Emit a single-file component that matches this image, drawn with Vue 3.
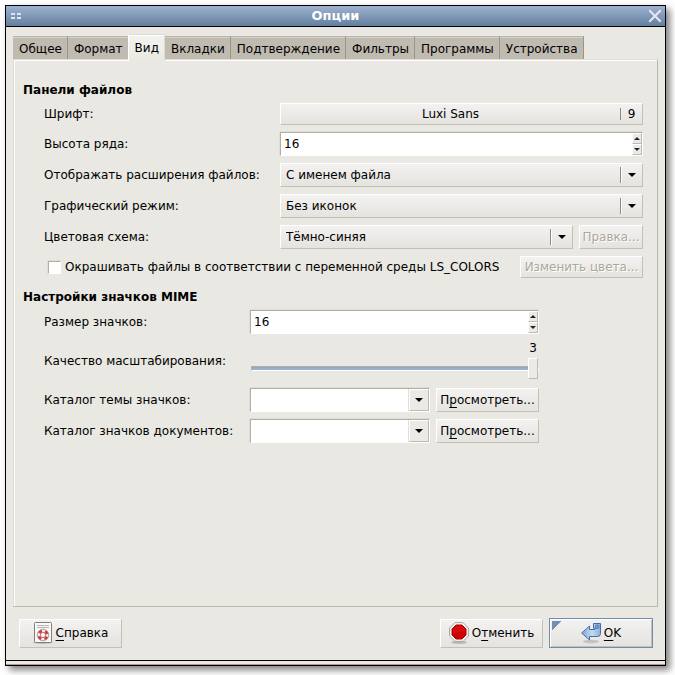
<script setup>
import { ref } from 'vue'

const tabs = ['Общее', 'Формат', 'Вид', 'Вкладки', 'Подтверждение', 'Фильтры', 'Программы', 'Устройства']
const active = ref('Вид')

const rowHeight = ref(16)
const iconSize = ref(16)
const quality = ref(3)
const useLsColors = ref(false)

const themeDir = ref('')
const documentDir = ref('')

const choices = [
  { id: 'extensions', label: 'Отображать расширения файлов:', options: ['С именем файла', 'В отдельном столбце'] },
  { id: 'graphics', label: 'Графический режим:', options: ['Без иконок', 'Значки файлов', 'Значки MIME'] },
  { id: 'scheme', label: 'Цветовая схема:', options: ['Тёмно-синяя', 'Классическая'], edit: true },
]
</script>

<template>
  <main class="window">
    <header class="titlebar">
      <svg class="grip" width="10" height="6" viewBox="0 0 10 6" aria-hidden="true">
        <path d="M0 0h4v2H0zM6 0h4v2H6zM0 4h4v2H0zM6 4h4v2H6z" fill="#dfe6ee" />
      </svg>
      <h1>Опции</h1>
      <button class="close" type="button" aria-label="Закрыть">
        <svg width="14" height="14" viewBox="0 0 14 14" aria-hidden="true">
          <path d="M2 2l10 10M12 2L2 12" stroke="#e3eaf2" stroke-width="2" stroke-linecap="square" />
        </svg>
      </button>
    </header>

    <div class="content">
      <div class="tabs" role="tablist">
        <button
          v-for="tab in tabs"
          :key="tab"
          type="button"
          role="tab"
          class="tab"
          :class="{ active: tab === active }"
          :aria-selected="tab === active"
          @click="active = tab"
        >{{ tab }}</button>
      </div>

      <section class="panel" role="tabpanel">
        <h2>Панели файлов</h2>
        <div class="form files">
          <label for="font">Шрифт:</label>
          <button id="font" class="btn font" type="button">
            <span class="font-name">Luxi Sans</span>
            <span class="font-size">9</span>
          </button>

          <label for="row-height">Высота ряда:</label>
          <div class="entry">
            <input id="row-height" v-model="rowHeight" type="text" inputmode="numeric">
            <div class="spin">
              <button type="button" aria-label="Больше" @click="rowHeight++">
                <svg width="6" height="3" viewBox="0 0 6 3"><path d="M0 3h6L3 0z" fill="#222" /></svg>
              </button>
              <button type="button" aria-label="Меньше" @click="rowHeight--">
                <svg width="6" height="3" viewBox="0 0 6 3"><path d="M0 0h6L3 3z" fill="#222" /></svg>
              </button>
            </div>
          </div>

          <template v-for="choice in choices" :key="choice.id">
            <label :for="choice.id">{{ choice.label }}</label>
            <div class="line">
              <div class="combo">
                <select :id="choice.id" class="btn">
                  <option v-for="option in choice.options" :key="option">{{ option }}</option>
                </select>
                <span class="combo-mark">
                  <svg width="8" height="4" viewBox="0 0 8 4"><path d="M0 0h8L4 4z" fill="#000" /></svg>
                </span>
              </div>
              <button v-if="choice.edit" class="btn small" type="button" disabled>Правка...</button>
            </div>
          </template>

          <div class="line check-line">
            <input id="ls-colors" v-model="useLsColors" type="checkbox">
            <label for="ls-colors">Окрашивать файлы в соответствии с переменной среды LS_COLORS</label>
            <button class="btn large" type="button" disabled>Изменить цвета...</button>
          </div>
        </div>

        <h2>Настройки значков MIME</h2>
        <div class="form icons">
          <label for="icon-size">Размер значков:</label>
          <div class="entry">
            <input id="icon-size" v-model="iconSize" type="text" inputmode="numeric">
            <div class="spin">
              <button type="button" aria-label="Больше" @click="iconSize++">
                <svg width="6" height="3" viewBox="0 0 6 3"><path d="M0 3h6L3 0z" fill="#222" /></svg>
              </button>
              <button type="button" aria-label="Меньше" @click="iconSize--">
                <svg width="6" height="3" viewBox="0 0 6 3"><path d="M0 0h6L3 3z" fill="#222" /></svg>
              </button>
            </div>
          </div>

          <label for="quality">Качество масштабирования:</label>
          <div class="scale">
            <output for="quality">{{ quality }}</output>
            <input id="quality" v-model="quality" type="range" min="0" max="3">
          </div>

          <label for="theme-dir">Каталог темы значков:</label>
          <div class="line">
            <div class="entry">
              <input id="theme-dir" v-model="themeDir" type="text">
              <button class="drop" type="button" aria-label="Показать список">
                <svg width="8" height="4" viewBox="0 0 8 4"><path d="M0 0h8L4 4z" fill="#000" /></svg>
              </button>
            </div>
            <button class="btn browse" type="button">П<u>р</u>осмотреть...</button>
          </div>

          <label for="document-dir">Каталог значков документов:</label>
          <div class="line">
            <div class="entry">
              <input id="document-dir" v-model="documentDir" type="text">
              <button class="drop" type="button" aria-label="Показать список">
                <svg width="8" height="4" viewBox="0 0 8 4"><path d="M0 0h8L4 4z" fill="#000" /></svg>
              </button>
            </div>
            <button class="btn browse" type="button">П<u>р</u>осмотреть...</button>
          </div>
        </div>
      </section>

      <footer class="actions">
        <button class="btn action help" type="button">
          <svg width="20" height="22" viewBox="0 0 20 22" aria-hidden="true">
            <ellipse cx="10" cy="20.5" rx="10" ry="1.5" fill="#000" opacity=".18" />
            <rect x="1.5" y=".5" width="17" height="20" rx="1" fill="#f8f8f7" stroke="#7d7f7b" />
            <path d="M4 3.5h12M4 5.5h12" stroke="#b5b6b3" />
            <circle cx="10" cy="13" r="4.2" fill="none" stroke="#f2eeee" stroke-width="3" />
            <circle cx="10" cy="13" r="4.2" fill="none" stroke="#d83a3a" stroke-width="3" stroke-dasharray="3.3 3.3" stroke-dashoffset="-1.65" />
            <circle cx="10" cy="13" r="5.8" fill="none" stroke="#b08888" stroke-width=".8" />
            <circle cx="10" cy="13" r="2.6" fill="#f8f8f7" stroke="#a86060" stroke-width=".8" />
          </svg>
          <span><u>С</u>правка</span>
        </button>
        <button class="btn action" type="button">
          <svg width="20" height="22" viewBox="0 0 20 22" aria-hidden="true">
            <ellipse cx="10" cy="20.3" rx="8" ry="1.6" fill="#000" opacity=".2" />
            <path d="M6 .6h8L19.4 6v8L14 19.4H6L.6 14V6z" fill="#f4f4f2" stroke="#a3a5a1" />
            <path d="M7 3h6l4 4v6l-4 4H7l-4-4V7z" fill="#cc0000" stroke="#b00000" />
            <path d="M7.2 3.8h5.6l3.4 3.4v2.3c-4 0-8 .5-12.400 2V7.2z" fill="#dc1818" opacity=".5" />
          </svg>
          <span>О<u>т</u>менить</span>
        </button>
        <button class="btn action default" type="button">
          <svg width="20" height="22" viewBox="0 0 20 22" aria-hidden="true">
            <defs>
              <linearGradient id="arrow-fill" x1="0" y1="0" x2="1" y2="0">
                <stop offset="0" stop-color="#7fa8d4" />
                <stop offset=".55" stop-color="#c6daee" />
                <stop offset="1" stop-color="#8db0d8" />
              </linearGradient>
            </defs>
            <ellipse cx="10" cy="19.5" rx="8" ry="1.8" fill="#000" opacity=".15" />
            <path d="M12.5 1.500h7v10q0 3-3 3H8.500v3.500L.700 11 8.500 4v3.500h5q1.200 0 1.200-1.200H12.500z" fill="url(#arrow-fill)" stroke="#3f6ea8" stroke-linejoin="round" />
            <path d="M14.500 3h3.300v3.500l-3.300-.5z" fill="#7199c8" stroke="#5580b4" stroke-width=".8" />
          </svg>
          <span><u>О</u>K</span>
        </button>
      </footer>
    </div>
    <div class="resize-bar"></div>
  </main>
</template>

<style>
body {
  margin: 0;
  background: #fff;
}
</style>

<style scoped>
* {
  box-sizing: border-box;
}

.window {
  display: flex;
  flex-direction: column;
  min-height: calc(100vh - 14px);
  margin: 5px 9px 9px 5px;
  border: 1px solid #000;
  background: #e9e8e2;
  color: #000;
  box-shadow: 4px 4px 7px rgba(0, 0, 0, 0.5);
  font-family: "DejaVu Sans", sans-serif;
  font-size: 12px;
  line-height: 16px;
}

button,
input,
select {
  margin: 0;
  font: inherit;
  color: inherit;
}

u {
  text-underline-offset: 3px;
  text-decoration-skip-ink: none;
}

.titlebar {
  display: grid;
  grid-template-columns: 18px 1fr 18px;
  align-items: center;
  height: 21px;
  border-bottom: 1px solid #000;
  background: linear-gradient(#9db2cf, #647f9f);
}

.grip {
  margin-left: 5px;
}

.titlebar h1 {
  margin: 0;
  color: #fff;
  font-size: 13px;
  text-align: center;
}

.close {
  display: flex;
  padding: 0 0 0 1px;
  border: 0;
  background: none;
}

.content {
  display: flex;
  flex: 1;
  flex-direction: column;
  padding: 7px 7px 12px;
}

.tabs {
  display: flex;
  align-items: flex-end;
}

.tab {
  height: 23px;
  padding: 1px 5px 0 6px;
  border: 0;
  border-top: 1px solid #bab5a8;
  border-right: 1px solid #9a9586;
  background: #c0bbb0;
  box-shadow: inset 0 1px #d6d2c8;
  white-space: nowrap;
}

.tab.active {
  z-index: 1;
  height: 27px;
  margin: 0 0 -2px -1px;
  padding-bottom: 1px;
  border-top: 1px solid #dedcd4;
  border-right: 1px solid #dedcd4;
  border-left: 1px solid #fff;
  background: linear-gradient(#f4f3f1, #e9e8e2);
  box-shadow: inset 0 1px #fff;
}

.panel {
  flex: 1;
  padding: 21px 14px 20px 9px;
  border: 1px solid #bab7ab;
  border-top-color: #dedcd4;
  border-left-color: #dedcd4;
  box-shadow: inset 1px 1px #fff;
}

h2 {
  margin: 0;
  font-size: 12px;
  line-height: 18px;
}

.panel h2 + .form {
  margin-top: 4px;
}

.form + h2 {
  margin-top: 10px;
}

.form {
  display: grid;
  align-items: center;
  row-gap: 7px;
  padding-left: 21px;
}

.files {
  grid-template-columns: 236px 1fr;
}

.icons {
  grid-template-columns: 206px 289px;
}

.line {
  display: flex;
  gap: 6px;
}

.btn {
  padding: 0;
  border: 1px solid;
  border-color: #fff #c3c0b6 #c3c0b6 #fff;
  border-radius: 0;
  background: linear-gradient(#f3f2f1, #e5e3de);
}

.btn:disabled {
  color: #aca899;
  text-shadow: 1px 1px #fff;
}

.font {
  display: flex;
  align-items: center;
  height: 22px;
}

.font-name {
  flex: 1;
}

.font-size {
  width: 22px;
  border-left: 1px solid #8e8a7c;
  line-height: 12px;
}

.entry {
  display: flex;
  flex: 1;
  min-width: 0;
  height: 24px;
  border: 1px solid;
  border-color: #b3b0a3 #fff #fff #b3b0a3;
  background: #fff;
  box-shadow: 0 -1px #dfddd5, -1px 0 #dfddd5;
}

.entry input {
  flex: 1;
  min-width: 0;
  padding: 0 3px;
  border: 0;
  outline: 0;
  background: none;
}

.spin {
  display: flex;
  flex-direction: column;
  width: 10px;
  background: #e2e0da;
}

.spin button,
.drop {
  display: flex;
  flex: 1;
  align-items: center;
  justify-content: center;
  padding: 0;
  border: 1px solid;
  border-color: #fff #bdbab0 #bdbab0 #fff;
  background: #eceae6;
}

.drop {
  flex: 0 0 20px;
  box-shadow: -1px 0 #dfddd5;
}

.combo {
  position: relative;
  flex: 1;
}

.combo select {
  display: block;
  width: 100%;
  height: 24px;
  padding: 0 26px 0 5px;
  appearance: none;
}

.combo-mark {
  position: absolute;
  top: 4px;
  right: 1px;
  display: flex;
  align-items: center;
  justify-content: center;
  width: 22px;
  height: 16px;
  border-left: 1px solid #8e8a7c;
  box-shadow: inset 1px 0 #fff;
  pointer-events: none;
}

.small {
  width: 64px;
}

.large {
  width: 123px;
  height: 22px;
}

.browse {
  width: 103px;
}

.check-line {
  grid-column: 1 / -1;
  gap: 4px;
  align-items: center;
  padding-left: 4px;
}

.check-line input {
  width: 13px;
  height: 13px;
  border: 1px solid;
  border-color: #b3b0a3 #fff #fff #b3b0a3;
  background: #fff;
  box-shadow: 0 -1px #dfddd5, -1px 0 #dfddd5;
  appearance: none;
}

.check-line input:checked {
  background: #6c88ab;
}

.check-line label {
  flex: 1;
  white-space: nowrap;
}

.scale {
  display: flex;
  flex-direction: column;
  height: 40px;
}

.scale output {
  padding-right: 2px;
  line-height: 14px;
  text-align: right;
}

.scale input {
  display: block;
  width: 100%;
  height: 28px;
  padding: 0 0 0 1px;
  appearance: none;
  background: none;
}

.scale input::-webkit-slider-runnable-track {
  height: 5px;
  border: 1px solid;
  border-color: #b3b0a3 #fff #fff #b3b0a3;
  background: linear-gradient(#8fa8c8, #9fb4cf);
}

.scale input::-webkit-slider-thumb {
  width: 10px;
  height: 21px;
  margin-top: -9px;
  border: 1px solid;
  border-color: #fff #bdbab0 #bdbab0 #fff;
  background: #eceae7;
  appearance: none;
}

.actions {
  display: flex;
  gap: 6px;
  align-items: center;
  padding: 11px 5px 0 6px;
}

.action {
  display: flex;
  gap: 3px;
  align-items: center;
  justify-content: center;
  width: 103px;
  height: 29px;
}

.help {
  margin-right: auto;
}

.default {
  width: 104px;
  height: 30px;
  border: 1px solid #6f8db1;
  background:
    linear-gradient(135deg, #7390b4 7px, transparent 7px) 2px 2px / 12px 12px no-repeat,
    linear-gradient(#f3f2f1, #e5e3de);
  box-shadow: inset 1px 1px #fff, inset -1px -1px #c3c0b6;
}

.resize-bar {
  height: 5px;
  border-top: 1px solid #000;
  border-bottom: 1px solid #a99c98;
  background: #eee6e4;
}
</style>
